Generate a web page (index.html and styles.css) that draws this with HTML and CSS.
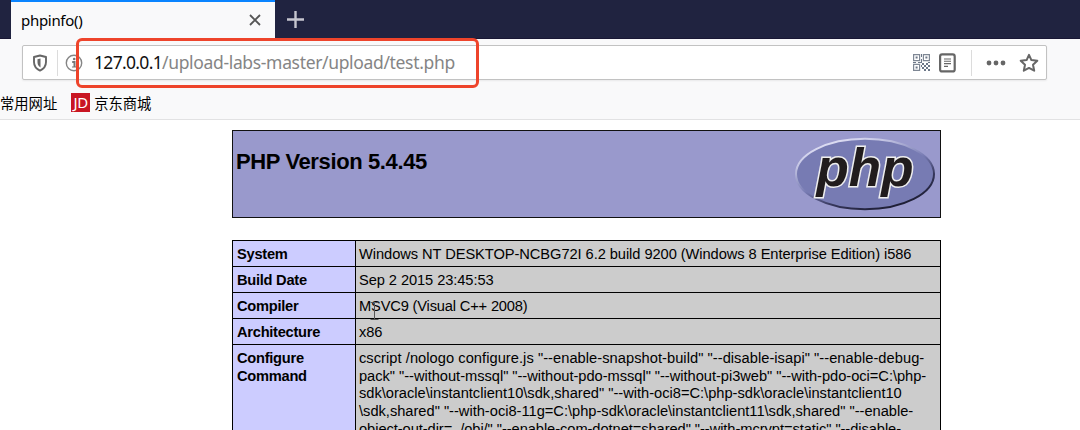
FILE: index.html
```html
<!DOCTYPE html>
<html lang="zh">
<head>
<meta charset="utf-8">
<title>phpinfo()</title>
<link rel="stylesheet" href="styles.css">
</head>
<body>
<header class="tabs">
  <div class="tab"><span class="tab-title">phpinfo()</span>
    <svg class="close" width="12" height="12" viewBox="0 0 12 12"><path d="M1 1l10 10M11 1L1 11"/></svg>
  </div>
  <svg class="plus" width="17" height="17" viewBox="0 0 17 17"><path d="M8.5 0v17M0 8.5h17"/></svg>
</header>
<div class="toolbar">
  <div class="urlbar">
    <svg class="shield" width="16" height="18" viewBox="0 0 16 18"><path d="M8 1.500L14 3v5c0 4-2.200 6.800-6 8.600C4.200 14.800 2 12 2 8V3z" fill="none" stroke="#666" stroke-width="1.900" stroke-linejoin="round"/><path d="M8.500 4.500v9C6 12 5.500 10.300 5.500 8V5.200z" fill="#666"/></svg>
    <span class="sep"></span>
    <svg class="info" width="18" height="18" viewBox="0 0 18 18"><circle cx="9" cy="9" r="7.700" fill="none" stroke="#858585" stroke-width="1.400"/><path d="M7.200 8h2.300v5" fill="none" stroke="#777" stroke-width="2"/><path d="M7 13h4.500" stroke="#777" stroke-width="1"/><circle cx="9.200" cy="5" r="1.300" fill="#777"/></svg>
    <span class="url"><b>127.0.0.1</b>/upload-labs-master/upload/test.php</span>
    <svg class="qr" width="17" height="17" viewBox="0 0 17 17">
      <g fill="none" stroke="#7e8794" stroke-width="1.200"><path d="M.6.6h6v6h-6zM10.400.6h6v6h-6zM.6 10.400h6v6h-6z"/></g>
      <path fill="#6c7788" d="M2.600 2.600h2v2h-2zM12.400 2.600h2v2h-2zM2.600 12.400h2v2h-2zM8 0h1v3H8zM8 5h1v4H8zM0 8h3v1H0zM5 8h3v1H5zM9 9h2v2H9zM13 9h2v2h-2zM11 11h2v2h-2zM15 11h2v2h-2zM9 13h2v2H9zM13 13h2v2h-2zM11 15h2v2h-2zM15 15h2v2h-2zM15 8h2v1h-2zM8 11h1v2H8z"/>
    </svg>
    <svg class="reader" width="17" height="20" viewBox="0 0 17 20"><rect x="1.100" y="1.400" width="14.600" height="17" rx="2" fill="none" stroke="#666" stroke-width="2.200"/><path d="M5 6h7M5 8.300h7M5 10.600h7M5 13.400h4" stroke="#666" stroke-width="1.100"/></svg>
    <span class="sep sep-right"></span>
    <svg class="dots" width="20" height="6" viewBox="0 0 20 6" fill="#666"><circle cx="3" cy="3" r="2.400"/><circle cx="10" cy="3" r="2.400"/><circle cx="17" cy="3" r="2.400"/></svg>
    <svg class="star" width="20" height="20" viewBox="0 0 20 20"><path d="M10 1.800l2.400 5.300 5.900.7-4.300 4 1.200 5.900L10 14.900l-5.200 2.800L6 11.800l-4.300-4 5.900-.7z" fill="none" stroke="#666" stroke-width="2" stroke-linejoin="round"/></svg>
  </div>
  <nav class="bookmarks"><span class="bm1">常用网址</span><span class="jd">JD</span><span>京东商城</span></nav>
</div>
<div class="highlight"></div>
<main class="page">
  <section class="banner">
    <h1><span>PHP Version 5.4.45</span></h1>
    <svg class="logo" width="142" height="76" viewBox="0 0 142 76">
      <defs><linearGradient id="rim" x1="0.200" y1="0" x2="0.800" y2="1"><stop offset="0" stop-color="#e6e6f8"/><stop offset=".2" stop-color="#c5c6e4"/><stop offset=".5" stop-color="#777bb3"/><stop offset=".72" stop-color="#35365a"/><stop offset="1" stop-color="#17172a"/></linearGradient></defs>
      <ellipse cx="71" cy="38" rx="69" ry="35.300" fill="#777bb3" stroke="url(#rim)" stroke-width="2"/>
      <text x="22.500" y="50" textLength="97" lengthAdjust="spacingAndGlyphs">php</text>
    </svg>
  </section>
  <table class="info-table">
    <tr><th>System</th><td><span class="l l1">Windows NT DESKTOP-NCBG72I 6.2 build 9200 (Windows 8 Enterprise Edition) i586</span></td></tr>
    <tr><th>Build Date</th><td><span class="l l2">Sep 2 2015 23:45:53</span></td></tr>
    <tr><th>Compiler</th><td><span class="l l3">MSVC9 (Visual C++ 2008)</span></td></tr>
    <tr><th>Architecture</th><td><span class="l l2">x86</span></td></tr>
    <tr><th>Configure<br>Command</th><td><span class="l l5">cscript /nologo configure.js "--enable-snapshot-build" "--disable-isapi" "--enable-debug-</span><span class="l l6">pack" "--without-mssql" "--without-pdo-mssql" "--without-pi3web" "--with-pdo-oci=C:\php-</span><span class="l l7">sdk\oracle\instantclient10\sdk,shared" "--with-oci8=C:\php-sdk\oracle\instantclient10</span><span class="l l8">\sdk,shared" "--with-oci8-11g=C:\php-sdk\oracle\instantclient11\sdk,shared" "--enable-</span><span class="l l9">object-out-dir=../obj/" "--enable-com-dotnet=shared" "--with-mcrypt=static" "--disable-</span></td></tr>
  </table>
</main>
<svg class="cursor" width="9" height="20" viewBox="0 0 9 20"><path d="M.5 1.500h3l1 1 1-1h3M4.500 2v16M.5 18.500h8"/></svg>
</body>
</html>
```
FILE: styles.css
```css
* { box-sizing: border-box; }
body { margin: 0; width: 1080px; height: 430px; overflow: hidden; position: relative; background: #fff; font-family: "Liberation Sans", Arial, sans-serif; color: #000; }
svg { display: block; flex: none; }
.tabs { height: 39px; background: #202340; border-bottom: 1px solid #191735; display: flex; padding-left: 11px; }
.tab { width: 264px; height: 39px; background: #f9f9fa; border-top: 2px solid #0a84ff; display: flex; align-items: center; justify-content: space-between; padding: 0 14px 2px 10px; font: 15px "Noto Sans", sans-serif; }
.tab-title { letter-spacing: -.3px; }
.close { margin-top: 1px; }
.close path { stroke: #555; stroke-width: 1.8; }
.plus { margin: 11px 0 0 12px; }
.plus path { stroke: #c6c6cf; stroke-width: 2.4; }
.toolbar { height: 81px; background: #f9f9fa; border-bottom: 1px solid #e2e2e3; padding: 6px 33px 0 22px; }
.urlbar { height: 35px; background: #fff; border: 1px solid #c2c2c2; border-radius: 2px; box-shadow: 0 1px 2px #0001; display: flex; align-items: center; padding: 0 7px 0 9px; }
.sep { width: 1px; height: 26px; background: #dcdcdc; margin: 0 7px 0 9px; flex: none; }
.url { font: 17.5px "Noto Sans", "Open Sans", sans-serif; color: #858585; margin: -1px 0 0 11px; white-space: nowrap; letter-spacing: -.34px; }
.url b { font-weight: 400; color: #111; letter-spacing: -.68px; }
.qr { margin-left: auto; }
.reader { margin-left: 9px; }
.sep-right { margin: 0 14px 0 15px; }
.star { margin-left: 13px; }
.bookmarks { display: flex; align-items: center; height: 20px; margin: 12px 0 0 -22px; font: 14.3px "Noto Sans CJK SC", sans-serif; white-space: nowrap; }
.jd { width: 19px; height: 19px; margin: 0 4px 0 14px; background: #c91623; color: #fff; font: 15px/19px "Noto Sans", sans-serif; text-align: center; letter-spacing: -.3px; }
.highlight { position: absolute; left: 76px; top: 38px; width: 403px; height: 50px; border: 3.5px solid #ee442b; border-radius: 6px; }
.page { width: 709px; margin: 10px 0 0 232px; }
.banner { height: 88px; background: #9999cc; border: 1px solid #111; display: flex; justify-content: space-between; padding: 0 3px; }
h1 { margin: 18px 0 0; font-size: 22px; line-height: 26px; white-space: nowrap; letter-spacing: -.38px; }
.logo { margin: 5px 1px 0 0; }
.logo text { font: italic bold 53px "Liberation Sans", sans-serif; fill: #211c1d; stroke: #eee; stroke-width: 3px; paint-order: stroke; }
.info-table { width: 709px; margin-top: 22px; border-collapse: collapse; table-layout: fixed; background: #ccc; font-size: 14.67px; line-height: 17.7px; }
.info-table th, .info-table td { border: 1px solid #000; vertical-align: top; text-align: left; padding: 5px 3px 2px; height: 26px; }
.info-table th { width: 123px; background: #ccccff; letter-spacing: -.27px; padding-left: 4px; }
.l { display: block; width: max-content; white-space: nowrap; }
.l1 { letter-spacing: -.065px; }
.l2 { letter-spacing: -.08px; }
.l3 { letter-spacing: -.17px; }
.l5 { letter-spacing: .045px; }
.l6 { letter-spacing: -.03px; }
.l7, .l8 { letter-spacing: -.01px; }
.l9 { letter-spacing: -.06px; }
.cursor { position: absolute; left: 370px; top: 301px; }
.cursor path { fill: none; stroke: #555; stroke-width: 1; }
```
